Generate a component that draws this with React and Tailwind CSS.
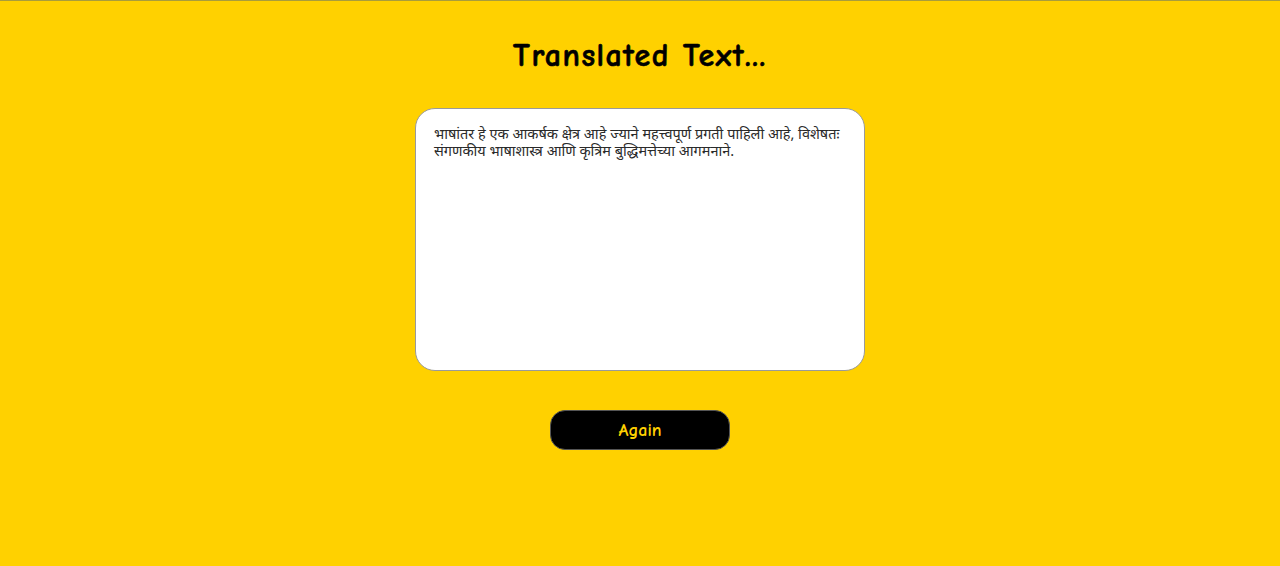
import React from 'react';

export default function App() {
  const translated =
    'भाषांतर हे एक आकर्षक क्षेत्र आहे ज्याने महत्त्वपूर्ण प्रगती पाहिली आहे, विशेषतः संगणकीय भाषाशास्त्र आणि कृत्रिम बुद्धिमत्तेच्या आगमनाने.';

  return (
    <div className="min-h-[566px] bg-[#ffd100] border-t border-[#a89c3c] flex flex-col items-center">
      <h1 className="mt-[31px] text-[32px] leading-[48px] font-bold text-black tracking-[1.5px] [-webkit-text-stroke:0.6px_black] font-['Comic_Sans_MS','Comic_Neue','Lato',sans-serif]">
        Translated Text...
      </h1>

      {/* Text box */}
      <div className="mt-[28px] w-[450px] h-[263px] bg-white border border-[#9a9a9a] rounded-[20px] px-[18px] pt-[16px]">
        <p className="text-[14.5px] leading-[17px] text-[#2a2a2a] font-['Noto_Sans','Liberation_Serif',serif]">
          {translated}
        </p>
      </div>

      <button className="mt-[39px] w-[180px] h-[40px] bg-black border border-[#555] rounded-[15px] text-[#ffd100] text-[18px] font-bold font-['Comic_Sans_MS','Comic_Neue','Lato',sans-serif]">
        Again
      </button>
    </div>
  );
}
